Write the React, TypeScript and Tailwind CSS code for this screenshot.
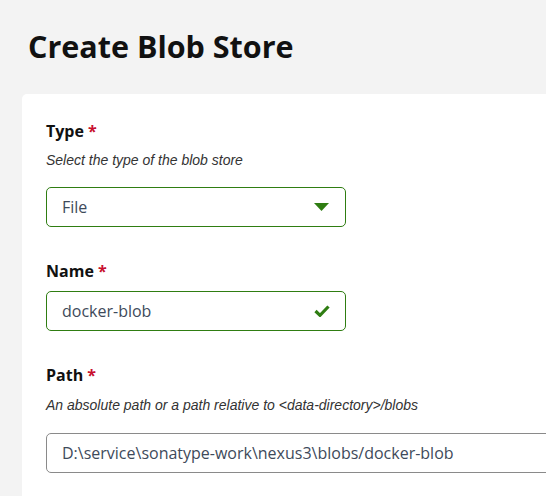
export default function App() {
  return (
    <div className="w-[546px] h-[496px] overflow-hidden bg-[#f3f3f3] font-['Open_Sans',sans-serif] text-[#1a1a1a]">
      {/* ページタイトル */}
      <h1 className="pt-[26px] pl-[28px] text-[30.5px] leading-[40px] font-bold text-[#111]">
        Create Blob Store
      </h1>

      {/* フォームカード */}
      <div className="mt-[28px] ml-[22px] w-[600px] h-[420px] bg-white rounded-tl-[5px] pt-[25px] pl-[24px]">
        <div>
          <Label text="Type" />
          <Help text="Select the type of the blob store" className="mt-[9px]" />
          <div className="mt-[19px] w-[300px] h-[40px] border border-[#2f7d12] rounded-[5px] flex items-center justify-between pl-[15px] pr-[16px]">
            <span className="text-[16px] text-[#3e4a5a]">File</span>
            <svg width="15" height="8" viewBox="0 0 15 8">
              <path d="M0 0 H15 L7.5 8 Z" fill="#2f7d12" />
            </svg>
          </div>
        </div>

        <div className="mt-[32px]">
          <Label text="Name" />
          <div className="mt-[8px] w-[300px] h-[40px] border border-[#2f7d12] rounded-[5px] flex items-center justify-between pl-[15px] pr-[15px]">
            <span className="text-[16px] text-[#3e4a5a]">docker-blob</span>
            <svg width="16" height="12" viewBox="0 0 16 12">
              <path d="M1.5 6 L6 10.3 L14.5 1.5" fill="none" stroke="#2f7d12" strokeWidth="3.2" />
            </svg>
          </div>
        </div>

        <div className="mt-[32px]">
          <Label text="Path" />
          <Help text="An absolute path or a path relative to <data-directory>/blobs" className="mt-[10px]" />
          <div className="mt-[20px] w-[560px] h-[40px] border border-[#8a8a8a] rounded-[5px] flex items-center pl-[15px]">
            <span className="text-[16px] text-[#3e4a5a]">
              D:\service\sonatype-work\nexus3\blobs/docker-blob
            </span>
          </div>
        </div>
      </div>
    </div>
  );
}

function Label({ text }: { text: string }) {
  return (
    <div className="text-[16px] leading-[24px] font-bold text-[#111]">
      {text} <span className="text-[#c8102e]">*</span>
    </div>
  );
}

function Help({ text, className }: { text: string; className: string }) {
  return (
    <p className={`${className} font-['Liberation_Sans',sans-serif] text-[14px] leading-[16px] italic text-[#333]`}>
      {text}
    </p>
  );
}
